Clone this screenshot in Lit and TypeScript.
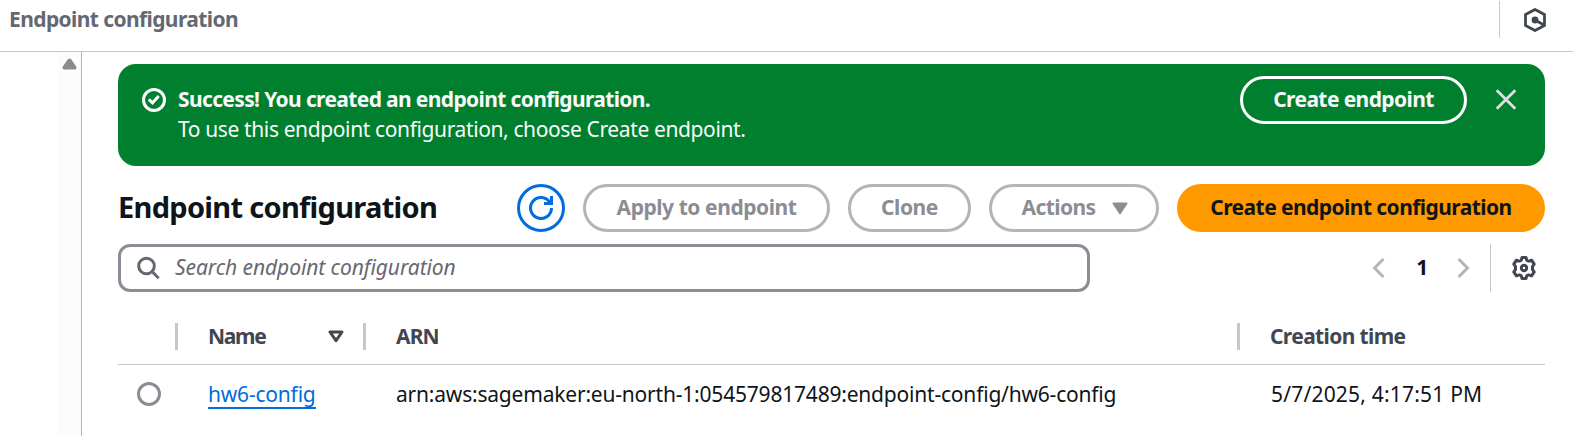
import { LitElement, html, css } from "lit";
import { customElement } from "lit/decorators.js";

@customElement("app-root")
class AppRoot extends LitElement {
  static styles = css`
    * { box-sizing: border-box; margin: 0; }
    :host { display: flex; flex-direction: column; height: 436px; overflow: hidden; background: #fff; color: #0f141a;
      font: 400 21px/30px "Noto Sans", sans-serif; letter-spacing: -0.38px; white-space: nowrap; }
    svg { display: block; flex: none; }
    .top { display: flex; justify-content: space-between; height: 52px; border-bottom: 1px solid #c6c6cd; padding: 1px 26px 0 9px; }
    .crumb { font-weight: 700; color: #656871; line-height: 36px; letter-spacing: -0.6px; }
    .tools { display: flex; align-items: center; height: 37px; border-left: 1px solid #c6c6cd; padding-left: 23px; }
    .body { flex: 1; display: flex; min-height: 0; }
    .rail { width: 82px; border-right: 1px solid #b4b4b4; display: flex; justify-content: flex-end; }
    .scroll { width: 23px; background: #fcfcfc; padding: 6px 0 0 4px; }
    .main { flex: 1; padding: 12px 28px 0 36px; display: flex; flex-direction: column; }
    .flash { height: 102px; background: #00802f; color: #fff; border-radius: 18px; display: flex; align-items: flex-start; padding: 12px 28px 0 24px; }
    .flash .status { margin: 12px 12px 0 0; }
    .msg { flex: 1; padding-top: 8px; color: #f9f9fa; }
    .msg strong { display: block; font-weight: 700; letter-spacing: -0.64px; }
    .btn { height: 48px; border: 3px solid #b4b4bb; border-radius: 24px; display: flex; align-items: center; justify-content: center;
      color: #8c8c94; font-weight: 700; letter-spacing: -0.44px; flex: none; }
    .label { line-height: 28px; padding-bottom: 2px; }
    .w-flash { width: 227px; border-color: #fff; color: #f9f9fa; letter-spacing: -0.6px; }
    .close { margin: 13px 0 0 28px; }
    .title { display: flex; gap: 18px; margin-top: 18px; height: 48px; align-items: center; }
    h1 { flex: 1; font-size: 29px; font-weight: 700; line-height: 36px; letter-spacing: -0.7px; padding-bottom: 2px; }
    .round { width: 48px; border-color: #006ce0; }
    .w-apply { width: 247px; }
    .w-clone { width: 123px; }
    .w-actions { width: 170px; gap: 17px; letter-spacing: -0.6px; padding-left: 2px; }
    .w-create { width: 368px; border: 0; background: #ff9900; color: #0f141a; letter-spacing: -0.56px; }
    .filter { display: flex; margin-top: 12px; height: 48px; align-items: center; justify-content: space-between; }
    .search { width: 972px; height: 48px; border: 3px solid #8c8c94; border-radius: 12px; display: flex; align-items: center; gap: 15px;
      padding-left: 15px; color: #656871; font-style: italic; letter-spacing: -0.08px; }
    .search .label, .page { padding-bottom: 2px; }
    .pager { display: flex; align-items: center; height: 48px; }
    .page { width: 73px; text-align: center; font-weight: 700; padding-left: 1px; }
    .prefs { display: flex; align-items: center; height: 48px; border-left: 1px solid #c6c6cd; margin-left: 20px; padding: 0 9px 0 21px; }
    .row { display: grid; grid-template-columns: 60px 188px 874px 1fr; align-items: center; }
    .head { margin-top: 16px; height: 57px; color: #424650; font-weight: 700; border-bottom: 1px solid #c6c6cd; letter-spacing: -0.62px; }
    .head > div { height: 27px; line-height: 25px; }
    .head .sep { border-right: 3px solid #c6c6cd; }
    .head .cell { display: flex; align-items: center; justify-content: space-between; padding: 0 19px 0 30px; }
    .head .name { letter-spacing: -1.3px; }
    .head .arn { letter-spacing: -0.9px; }
    .data { height: 60px; }
    .data .cell { padding: 0 0 2px 30px; }
    .radio { width: 24px; height: 24px; border: 3px solid #8c8c94; border-radius: 50%; margin: 0 0 2px 19px; }
    .link { color: #006ce0; display: inline-block; line-height: 25px; height: 27px; border-bottom: 2px solid #006ce0; letter-spacing: -0.2px; margin-top: 2px; }
    .data .arn { letter-spacing: -0.2px; }
    .data .date { letter-spacing: 0.2px; padding-left: 31px; }
  `;

  render() {
    return html`
      <header class="top">
        <div class="crumb">Endpoint configuration</div>
        <div class="tools">
          <svg width="24" height="26" viewBox="0 0 24 26" fill="none" stroke="#424650" stroke-width="2.8" stroke-linejoin="round">
            <path d="M21.500 18.400V7.600L12 2.500 2.500 7.600V18.400L12 23.500ZM12 13l8.500 4.800" />
            <circle cx="12" cy="13" r="3.400" fill="#424650" stroke="none" />
          </svg>
        </div>
      </header>
      <div class="body">
        <aside class="rail">
          <div class="scroll">
            <svg width="15" height="12" viewBox="0 0 15 12" fill="#8b8b8b"><path d="M6 1Q7.500 -.2 9 1L14.300 8.800Q15 11.400 13 11.500H2Q0 11.400.7 8.800Z" /></svg>
          </div>
        </aside>
        <main class="main">
          <section class="flash">
            <svg class="status" width="24" height="24" viewBox="0 0 24 24" fill="none" stroke="#fff" stroke-width="3">
              <circle cx="12" cy="12" r="10.500" /><path d="M6.800 11.300l3.700 3.600 6.200-7" />
            </svg>
            <div class="msg"><strong>Success! You created an endpoint configuration.</strong>To use this endpoint configuration, choose Create endpoint.</div>
            <div class="btn w-flash"><span class="label">Create endpoint</span></div>
            <svg class="close" width="22" height="22" viewBox="0 0 22 22" stroke="#dedee3" stroke-width="2.8"><path d="M1.700 1.200l18.600 18.600M20.300 1.200L1.700 19.800" /></svg>
          </section>
          <section class="title">
            <h1>Endpoint configuration</h1>
            <div class="btn round">
              <svg width="24" height="24" viewBox="0 0 24 24" fill="none" stroke="#006ce0" stroke-width="3">
                <path d="M22.500 12A10.500 10.500 0 1 1 20.400 5.700L22 7.500M15 7.500h7.500V0" />
              </svg>
            </div>
            <div class="btn w-apply"><span class="label">Apply to endpoint</span></div>
            <div class="btn w-clone"><span class="label">Clone</span></div>
            <div class="btn w-actions"><span class="label">Actions</span>
              <svg width="16" height="13" viewBox="0 0 16 13"><path d="M1.500 1.500h13L8 11.300Z" fill="#8c8c94" stroke="#8c8c94" stroke-width="2" stroke-linejoin="round" /></svg>
            </div>
            <div class="btn w-create"><span class="label">Create endpoint configuration</span></div>
          </section>
          <section class="filter">
            <div class="search">
              <svg width="24" height="24" viewBox="0 0 24 24" fill="none" stroke="#656871" stroke-width="3">
                <circle cx="10.500" cy="10" r="7.800" /><path d="M16 15.500l6.700 6.700" />
              </svg>
              <span class="label">Search endpoint configuration</span>
            </div>
            <div class="pager">
              <svg width="12" height="20" viewBox="0 0 12 20" fill="none" stroke="#b4b4bb" stroke-width="3"><path d="M10.500 1l-9 9 9 9" /></svg>
              <div class="page">1</div>
              <svg width="12" height="20" viewBox="0 0 12 20" fill="none" stroke="#b4b4bb" stroke-width="3"><path d="M.5 1l9 9-9 9" /></svg>
              <div class="prefs">
                <svg width="24" height="24" viewBox="0 0 24 24" fill="none" stroke="#424650" stroke-width="3" stroke-linejoin="round">
                  <path d="M10 1.500h4l.8 2.900 1.800.7 3-.9 2.600 3.900-1.700 2.200v3.400l1.700 2.200-2.600 3.900-3-.9-1.800.7-.8 2.900h-4l-.8-2.900-1.800-.7-3 .9-2.600-3.900 1.700-2.200v-3.400L1.800 8.100l2.600-3.900 3 .9 1.800-.7Z" />
                  <circle cx="12" cy="12" r="2.700" />
                </svg>
              </div>
            </div>
          </section>
          <div class="row head">
            <div class="sep"></div>
            <div class="cell sep"><span class="name">Name</span>
              <svg width="16" height="13" viewBox="0 0 16 13" fill="none" stroke="#424650" stroke-width="3" stroke-linejoin="round"><path d="M2 2h12L8 10.600Z" /></svg>
            </div>
            <div class="cell sep arn">ARN</div>
            <div class="cell">Creation time</div>
          </div>
          <div class="row data">
            <div class="radio"></div>
            <div class="cell"><span class="link">hw6-config</span></div>
            <div class="cell arn">arn:aws:sagemaker:eu-north-1:054579817489:endpoint-config/hw6-config</div>
            <div class="cell date">5/7/2025, 4:17:51 PM</div>
          </div>
        </main>
      </div>
    `;
  }
}
